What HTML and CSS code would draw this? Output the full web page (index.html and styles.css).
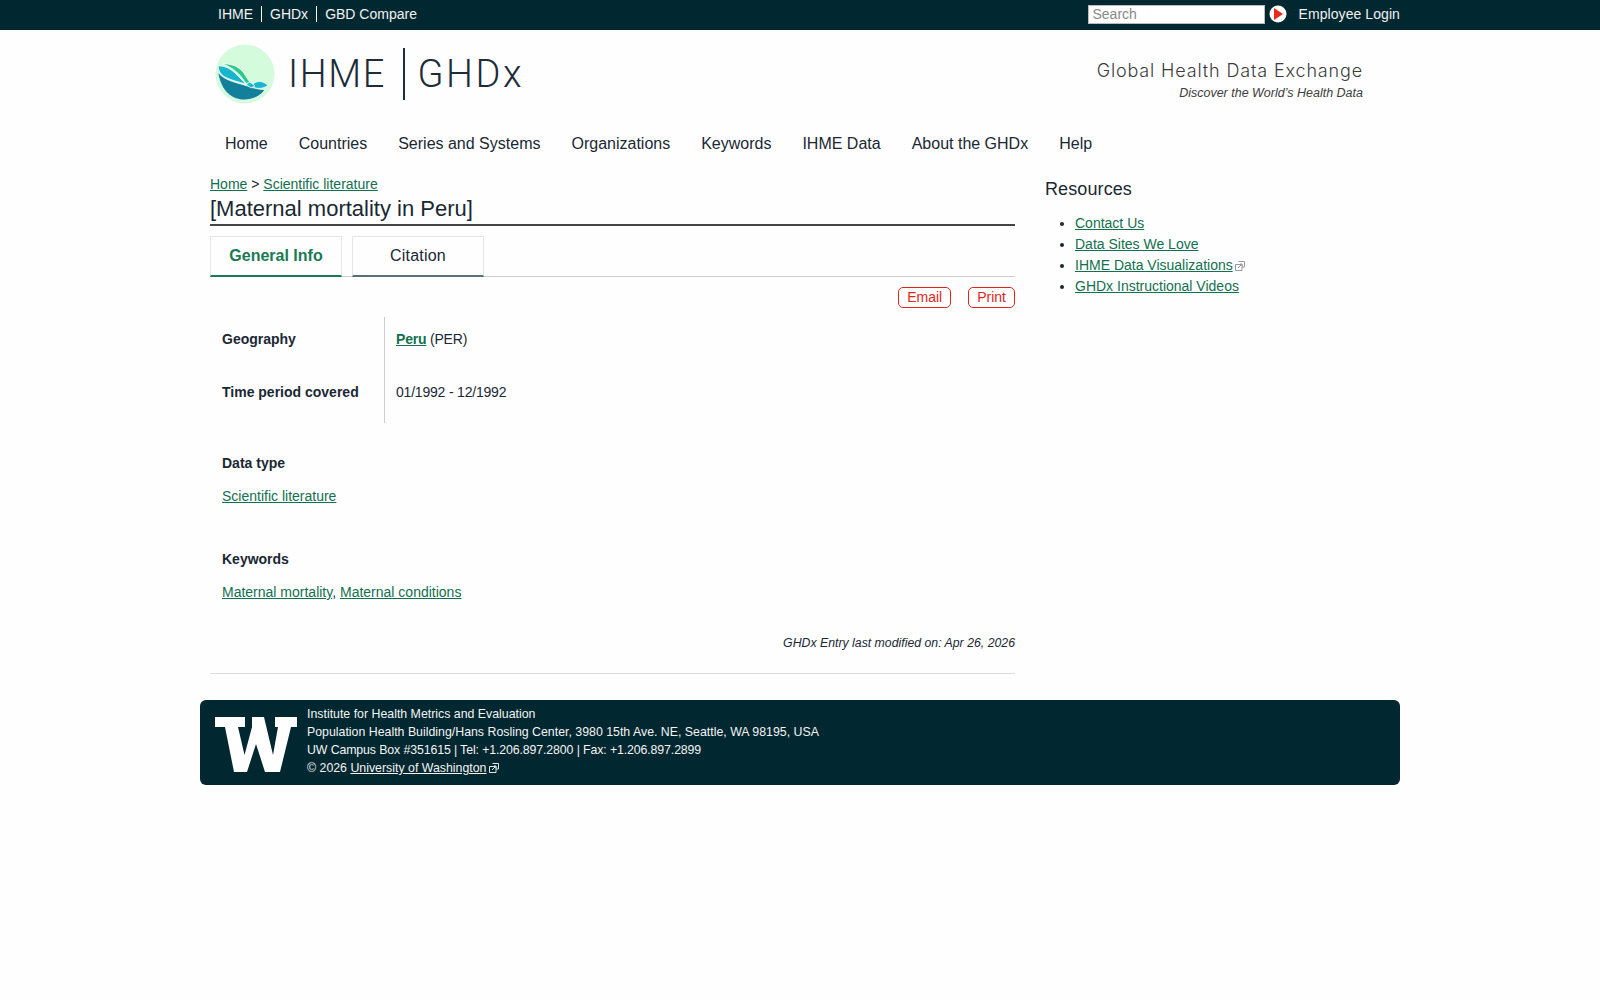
FILE: index.html
```html
<!DOCTYPE html>
<html lang="en">
<head>
<meta charset="utf-8">
<title>[Maternal mortality in Peru] | GHDx</title>
<link rel="stylesheet" href="styles.css">
</head>
<body>
<svg class="defs" width="0" height="0" aria-hidden="true">
  <symbol id="ext" viewBox="0 0 10 10">
    <path d="M3.5 .5h6v5.5h-2.5M.5 3.5h6.5v6h-6.5z M3 7l4-4M5 3h2v2" fill="none" stroke="currentColor" stroke-width="1"/>
  </symbol>
</svg>
<header class="topbar">
  <div class="wrap topbar-in">
    <nav class="toplinks"><a>IHME</a><a>GHDx</a><a>GBD Compare</a></nav>
    <div class="topright">
      <input class="search" placeholder="Search">
      <svg class="go" viewBox="0 0 18 18" width="18" height="18"><circle cx="9" cy="9" r="8.5" fill="#fff"/><path d="M5 3l9 6-9 6z" fill="#e8291c"/></svg>
      <a class="login">Employee Login</a>
    </div>
  </div>
</header>
<div class="wrap">
  <div class="brand">
    <div class="logo">
      <svg class="mark" viewBox="0 0 60 60" width="60" height="60">
        <circle cx="30" cy="30" r="29.5" fill="#d4fcdc"/>
        <g stroke="#fff" stroke-width=".7" stroke-linejoin="round">
          <path d="M2.8 28C7 34 15 37 24 39.5C32 41.5 42 46 50 45.5C46 52 38 56 28 56C14 55 5 44 2.8 28Z" fill="#12809b"/>
          <path d="M3 22C8 21.5 15 24 20 29C24 33 28 37 31 40C24 38 15 36 9 32.5C5.5 30 3.5 27 3 22Z" fill="#17b6cd"/>
          <path d="M7.7 20C14 19.5 22 21 28 28C31 32 33 36 35 38.5L31 39.5C27 33 20 24 7.7 20Z" fill="#2cc88f"/>
          <path d="M38 40C43 36 48 37 53 41.5C48 45 42 45 38 43Z" fill="#17b6cd"/>
          <path d="M31 40L35 38L40 42L36 44Z" fill="#17b6cd"/>
        </g>
      </svg>
      <span class="logo-txt">IHME</span>
      <span class="logo-bar"></span>
      <span class="logo-txt logo-wide">GHDx</span>
    </div>
    <div class="tagline">
      <div class="tag-main">Global Health Data Exchange</div>
      <div class="tag-sub">Discover the World’s Health Data</div>
    </div>
  </div>
  <nav class="mainnav">
    <a>Home</a><a>Countries</a><a>Series and Systems</a><a>Organizations</a><a>Keywords</a><a>IHME Data</a><a>About the GHDx</a><a>Help</a>
  </nav>
  <div class="columns">
    <main class="content">
      <div class="crumbs"><a class="lnk">Home</a> &gt; <a class="lnk">Scientific literature</a></div>
      <h1>[Maternal mortality in Peru]</h1>
      <div class="tabs">
        <div class="tab active">General Info</div>
        <div class="tab tab-plain">Citation</div>
      </div>
      <div class="actions"><a class="pill">Email</a><a class="pill">Print</a></div>
      <div class="facts">
        <div class="fact-labels">
          <div class="fact-label">Geography</div>
          <div class="fact-label">Time period covered</div>
        </div>
        <div class="fact-values">
          <div class="fact-value"><a class="lnk strong">Peru</a> (PER)</div>
          <div class="fact-value">01/1992 - 12/1992</div>
        </div>
      </div>
      <section class="block block-type">
        <h3>Data type</h3>
        <p><a class="lnk">Scientific literature</a></p>
      </section>
      <section class="block block-key">
        <h3>Keywords</h3>
        <p><a class="lnk">Maternal mortality</a>, <a class="lnk">Maternal conditions</a></p>
      </section>
      <div class="modified">GHDx Entry last modified on: Apr 26, 2026</div>
    </main>
    <aside class="side">
      <h2>Resources</h2>
      <ul>
        <li><a class="lnk">Contact Us</a></li>
        <li><a class="lnk">Data Sites We Love</a></li>
        <li><a class="lnk">IHME Data Visualizations</a><svg class="ext ext-side"><use href="#ext"/></svg></li>
        <li><a class="lnk">GHDx Instructional Videos</a></li>
      </ul>
    </aside>
  </div>
  <footer class="foot">
    <svg class="uw" viewBox="0 0 82 55" width="82" height="55"><path d="M0 0H30V10H23L29.5 38L37 10V0H49L58 38L63 10H60V0H82V10H76L65 55H50L41 27L32 55H19L10 10H0Z" fill="#fff"/></svg>
    <div class="foot-txt">
      <div>Institute for Health Metrics and Evaluation</div>
      <div>Population Health Building/Hans Rosling Center, 3980 15th Ave. NE, Seattle, WA 98195, USA</div>
      <div class="num">UW Campus Box #351615 | Tel: +1.206.897.2800 | Fax: +1.206.897.2899</div>
      <div>© 2026 <a class="foot-lnk">University of Washington</a><svg class="ext"><use href="#ext"/></svg></div>
    </div>
  </footer>
</div>
</body>
</html>
```
FILE: styles.css
```css
* { box-sizing: border-box; }
html, body { margin: 0; padding: 0; }
body { background: #fefefe; color: #1a2833; font-family: "Liberation Sans", Arial, sans-serif; font-size: 14px; }
.defs { position: absolute; }
.wrap { width: 1200px; margin: 0 auto; }
.topbar { background: #012730; height: 30px; color: #f2f2f2; }
.topbar-in { height: 30px; padding-bottom: 2px; display: flex; justify-content: space-between; align-items: center; }
.toplinks { display: flex; padding-left: 10px; line-height: 16px; }
.toplinks a { padding: 0 8px; border-left: 1px solid #fff; }
.toplinks a:first-child { border-left: 0; }
.topright { display: flex; align-items: center; }
.search { width: 177px; height: 19px; border: 1px solid #bbb; background: #fff; padding: 0 3px; font: 14px "Liberation Sans", Arial, sans-serif; }
.search::placeholder { color: #888; opacity: 1; }
.go { margin: 0 11px 0 4px; }
.login { letter-spacing: .08px; }
.brand { height: 104px; padding: 14px 37px 0 15px; display: flex; justify-content: space-between; }
.logo { display: flex; align-items: center; height: 60px; }
.mark { margin-right: 13px; }
.logo-txt { font: 300 38px Roboto, "Liberation Sans", sans-serif; letter-spacing: 1.6px; color: #1c2c38; }
.logo-wide { letter-spacing: 2.6px; }
.logo-bar { width: 2px; height: 52px; background: #1c2c38; margin: 0 12px 0 17.5px; }
.tagline { text-align: right; padding-top: 16px; color: #3c3c3c; }
.tag-main { font: 300 18px/22px Inter, Lato, sans-serif; letter-spacing: .85px; }
.tag-sub { font-style: italic; font-size: 12.5px; line-height: 23px; }
.mainnav { display: flex; padding-left: 25px; height: 32px; align-items: center; font-size: 16px; margin-top: -6px; margin-bottom: 8px; }
.mainnav a { margin-right: 31px; }
.columns { display: flex; padding-left: 10px; }
.content { width: 805px; }
.crumbs { height: 17px; line-height: 17px; margin-top: 8px; }
.lnk { color: #12704e; text-decoration: underline; }
.lnk.strong { font-weight: bold; }
h1 { margin: 1px 0 0; font-size: 22px; font-weight: 400; line-height: 30px; height: 32px; border-bottom: 2px solid #444; }
.tabs { display: flex; gap: 10px; margin-top: 10px; border-bottom: 1px solid #ccc; height: 41px; }
.tab { width: 132px; height: 41px; border: 1px solid #e6e6e6; border-bottom: 2px solid #1a7a54; text-align: center; font-size: 16px; line-height: 38px; }
.tab.active { font-weight: bold; color: #1a7a54; }
.tab.tab-plain { border-bottom-color: #5e6e78; letter-spacing: .2px; }
.actions { display: flex; justify-content: flex-end; gap: 17px; margin-top: 10px; }
.pill { height: 21px; line-height: 19px; padding: 0 8px; border: 1px solid #e0261c; border-radius: 5px; color: #e0261c; }
.facts { display: flex; margin-top: 9px; height: 106px; }
.fact-labels { width: 175px; border-right: 1px solid #ccc; padding-left: 12px; }
.fact-values { padding-left: 11px; }
.fact-label, .fact-value { height: 53px; line-height: 17px; padding-top: 14px; }
.fact-label { font-weight: bold; }
.fact-value { letter-spacing: -.2px; }
.block { padding-left: 12px; }
.block h3 { margin: 0; font-size: 14px; line-height: 17px; }
.block p { margin: 16px 0 0; line-height: 17px; }
.block-type { margin-top: 32px; }
.block-key { margin-top: 46px; }
.modified { margin-top: 34px; height: 39px; text-align: right; font-style: italic; font-size: 12.3px; line-height: 17px; border-bottom: 1px solid #ddd; }
.side { margin-left: 30px; flex: 1; }
.side h2 { margin: 10px 0 0; font-size: 18px; font-weight: 400; line-height: 22px; letter-spacing: .1px; }
.side ul { margin: 13px 0 0; padding: 0 0 0 30px; }
.side li { height: 21px; line-height: 21px; }
.ext { width: 10px; height: 10px; margin-left: 2px; vertical-align: -1px; color: #dfe8e8; }
.ext-side { color: #999; }
.foot { display: flex; height: 85px; margin-top: 26px; background: #012730; border-radius: 6px; padding: 5px 0 0 15px; color: #f4f4f4; font-size: 12.35px; line-height: 18px; }
.num { letter-spacing: -.12px; }
.uw { margin: 12px 10px 0 0; }
.foot-lnk { text-decoration: underline; }
```
